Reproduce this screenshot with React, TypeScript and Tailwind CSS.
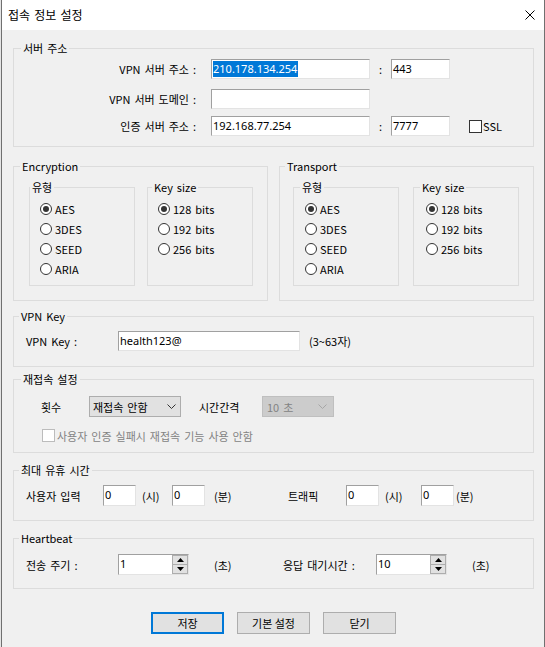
import type { ReactNode } from 'react';

const VALUE_FONT = "font-['Noto_Sans','Noto_Sans_CJK_KR',sans-serif]";

function Group({
  title,
  className = '',
  labelClass = 'ml-[6px]',
  children,
}: {
  title: string;
  className?: string;
  labelClass?: string;
  children?: ReactNode;
}) {
  return (
    <div className={`border border-[#dcdcdc] ${className}`}>
      <div className={`-mt-[8px] w-fit bg-[#f0f0f0] px-[2px] leading-[14px] ${labelClass}`}>{title}</div>
      {children}
    </div>
  );
}

function Field({ value = '', className = '', selected = false }: { value?: string; className?: string; selected?: boolean }) {
  return (
    <div
      className={`h-[20px] shrink-0 border border-[#a0a0a0] border-b-[#e3e3e3] border-r-[#e3e3e3] bg-white pl-[1px] pt-[1px] text-[11px] leading-[16px] [word-spacing:0px] ${VALUE_FONT} ${className}`}
    >
      {selected ? <span className="inline-block bg-[#0078d7] pr-[1px] text-white">{value}</span> : value}
    </div>
  );
}

function Radio({ label, checked = false }: { label: string; checked?: boolean }) {
  return (
    <div className="flex h-[20px] items-center">
      <span className="flex h-[12px] w-[12px] items-center justify-center rounded-full border border-[#333333] bg-white">
        {checked && <span className="h-[6px] w-[6px] rounded-full bg-[#333333]" />}
      </span>
      <span className="ml-[3px]">{label}</span>
    </div>
  );
}

function Check({ disabled = false }: { disabled?: boolean }) {
  return (
    <span
      className={`block h-[13px] w-[13px] shrink-0 border bg-white ${disabled ? 'border-[#bcbcbc]' : 'border-[#333333]'}`}
    />
  );
}

function Chevron({ color }: { color: string }) {
  return (
    <svg width="9" height="5" viewBox="0 0 9 5" className="shrink-0">
      <polyline points="0.5,0.5 4.5,4.5 8.5,0.5" fill="none" stroke={color} strokeWidth="1" />
    </svg>
  );
}

function Select({ value, className = '', disabled = false }: { value: string; className?: string; disabled?: boolean }) {
  return (
    <div
      className={`flex h-[21px] shrink-0 items-center justify-between border ${
        disabled
          ? 'border-[#bfbfbf] bg-[#cccccc] pl-[4px] pr-[6px] text-[#838383]'
          : 'border-[#adadad] bg-[#e1e1e1] pl-[3px] pr-[4px]'
      } ${className}`}
    >
      <span>{value}</span>
      <Chevron color={disabled ? '#a6a6a6' : '#333333'} />
    </div>
  );
}

function Spin({ value }: { value: string }) {
  return (
    <div className="flex h-[21px] w-[71px] shrink-0 border border-[#a0a0a0] border-b-[#e3e3e3] border-r-[#e3e3e3] bg-white">
      <div className={`flex-1 pl-[1px] pt-[1px] text-[11px] leading-[16px] ${VALUE_FONT}`}>{value}</div>
      <div className="flex w-[16px] flex-col">
        <div className="flex flex-1 items-center justify-center border border-[#adadad] bg-[#e1e1e1]">
          <svg width="7" height="4" viewBox="0 0 7 4">
            <polygon points="3.5,0 7,4 0,4" fill="#000" />
          </svg>
        </div>
        <div className="flex flex-1 items-center justify-center border border-t-0 border-[#adadad] bg-[#e1e1e1]">
          <svg width="7" height="4" viewBox="0 0 7 4">
            <polygon points="0,0 7,0 3.5,4" fill="#000" />
          </svg>
        </div>
      </div>
    </div>
  );
}

function CipherGroup({ title, transport = false }: { title: string; transport?: boolean }) {
  return (
    <Group title={title} className="w-[255px] pb-[14px]" labelClass={transport ? 'ml-[5px]' : 'ml-[6px]'}>
      <div className={`mt-[14px] flex ${transport ? 'ml-[13px] gap-[14px]' : 'ml-[15px] gap-[12px]'}`}>
        <Group title="유형" className="w-[106px] pb-[6px]" labelClass={transport ? 'ml-[6px]' : 'ml-0'}>
          <div className={`mt-[5px] ${transport ? 'pl-[11px]' : 'pl-[10px]'}`}>
            <Radio label="AES" checked />
            <Radio label="3DES" />
            <Radio label="SEED" />
            <Radio label="ARIA" />
          </div>
        </Group>
        <Group title="Key size" className="w-[106px] pb-[6px]" labelClass={transport ? 'ml-[6px]' : 'ml-[4px]'}>
          <div className={`mt-[5px] pb-[20px] ${transport ? 'pl-[12px]' : 'pl-[10px]'}`}>
            <Radio label="128 bits" checked />
            <Radio label="192 bits" />
            <Radio label="256 bits" />
          </div>
        </Group>
      </div>
    </Group>
  );
}

export default function App() {
  return (
    <div className="flex h-[647px] w-[545px] overflow-hidden font-['Noto_Sans_CJK_KR',sans-serif] text-[11px] leading-[14px] text-black [word-spacing:1.5px]">
      <div className="w-[1px] bg-[#e4e4e4]" />
      <div className="flex w-[544px] flex-col border-x border-[#707070]">
        {/* Title bar */}
        <div className="flex h-[30px] shrink-0 items-center justify-between bg-white pl-[6px] pr-[9px]">
          <span className="text-[12px] leading-[16px]">접속 정보 설정</span>
          <svg width="10" height="10" viewBox="0 0 10 10">
            <path d="M0.5 0.5 L9.5 9.5 M9.5 0.5 L0.5 9.5" stroke="#000" strokeWidth="1" />
          </svg>
        </div>

        <div className="flex flex-1 flex-col bg-[#f0f0f0] pl-[11px] pr-[10px]">
          {/* 서버 주소 */}
          <Group title="서버 주소" className="mt-[18px] pb-[10px]" labelClass="ml-[7px]">
            <div className="mt-[4px] flex h-[20px] items-center">
              <div className="w-[182px] text-right">VPN 서버 주소 :</div>
              <Field className="ml-[15px] w-[159px]" value="210.178.134.254" selected />
              <div className="w-[21px] text-center">:</div>
              <Field className="w-[59px]" value="443" />
            </div>
            <div className="mt-[10px] flex h-[20px] items-center">
              <div className="w-[182px] text-right">VPN 서버 도메인 :</div>
              <Field className="ml-[15px] w-[159px]" />
            </div>
            <div className="mt-[7px] flex h-[20px] items-center">
              <div className="w-[182px] text-right">인증 서버 주소 :</div>
              <Field className="ml-[15px] w-[159px]" value="192.168.77.254" />
              <div className="w-[21px] text-center">:</div>
              <Field className="w-[59px]" value="7777" />
              <div className="ml-[19px] flex items-center">
                <Check />
                <span className="ml-[1px]">SSL</span>
              </div>
            </div>
          </Group>

          {/* Encryption / Transport */}
          <div className="mt-[19px] flex justify-between">
            <CipherGroup title="Encryption" />
            <CipherGroup title="Transport" transport />
          </div>

          {/* VPN Key */}
          <Group title="VPN Key" className="mt-[15px] pb-[15px]" labelClass="ml-[5px]">
            <div className="mt-[8px] flex h-[20px] items-center pl-[12px]">
              <div className="w-[92px]">VPN Key :</div>
              <Field className="w-[182px]" value="health123@" />
              <div className="ml-[9px]">(3~63자)</div>
            </div>
          </Group>

          {/* 재접속 설정 */}
          <Group title="재접속 설정" className="mt-[12px] pb-[10px]" labelClass="ml-[7px]">
            <div className="mt-[10px] flex h-[21px] items-center pl-[27px]">
              <div className="w-[48px]">횟수</div>
              <Select className="w-[92px]" value="재접속 안함" />
              <div className="ml-[18px] w-[63px]">시간간격</div>
              <Select className="w-[72px]" value="10 초" disabled />
            </div>
            <div className="mt-[12px] flex h-[13px] items-center pl-[28px]">
              <Check disabled />
              <span className="ml-[2px] text-[#838383]">사용자 인증 실패시 재접속 기능 사용 안함</span>
            </div>
          </Group>

          {/* 최대 유휴 시간 */}
          <Group title="최대 유휴 시간" className="mt-[17px] pb-[14px]" labelClass="ml-[5px]">
            <div className="mt-[8px] flex h-[21px] items-center pl-[12px]">
              <div className="w-[77px]">사용자 입력</div>
              <Field className="h-[21px] w-[33px]" value="0" />
              <div className="ml-[6px] w-[30px]">(시)</div>
              <Field className="h-[21px] w-[33px]" value="0" />
              <div className="ml-[9px] w-[74px]">(분)</div>
              <div className="w-[58px]">트래픽</div>
              <Field className="h-[21px] w-[33px]" value="0" />
              <div className="ml-[6px] w-[36px]">(시)</div>
              <Field className="h-[21px] w-[33px]" value="0" />
              <div className="ml-[2px]">(분)</div>
            </div>
          </Group>

          {/* Heartbeat */}
          <Group title="Heartbeat" className="mt-[17px] pb-[13px]" labelClass="ml-[5px]">
            <div className="mt-[9px] flex h-[21px] items-center pl-[12px]">
              <div className="w-[92px]">전송 주기 :</div>
              <Spin value="1" />
              <div className="ml-[25px] w-[69px]">(초)</div>
              <div className="w-[93px]">응답 대기시간 :</div>
              <Spin value="10" />
              <div className="ml-[25px]">(초)</div>
            </div>
          </Group>

          {/* Buttons */}
          <div className="mt-[23px] flex justify-center gap-[13px]">
            <button className="h-[22px] w-[73px] border-2 border-[#0078d7] bg-[#e1e1e1] leading-[14px]">저장</button>
            <button className="h-[22px] w-[73px] border border-[#adadad] bg-[#e1e1e1] leading-[14px]">기본 설정</button>
            <button className="h-[22px] w-[73px] border border-[#adadad] bg-[#e1e1e1] leading-[14px]">닫기</button>
          </div>
        </div>
      </div>
    </div>
  );
}
